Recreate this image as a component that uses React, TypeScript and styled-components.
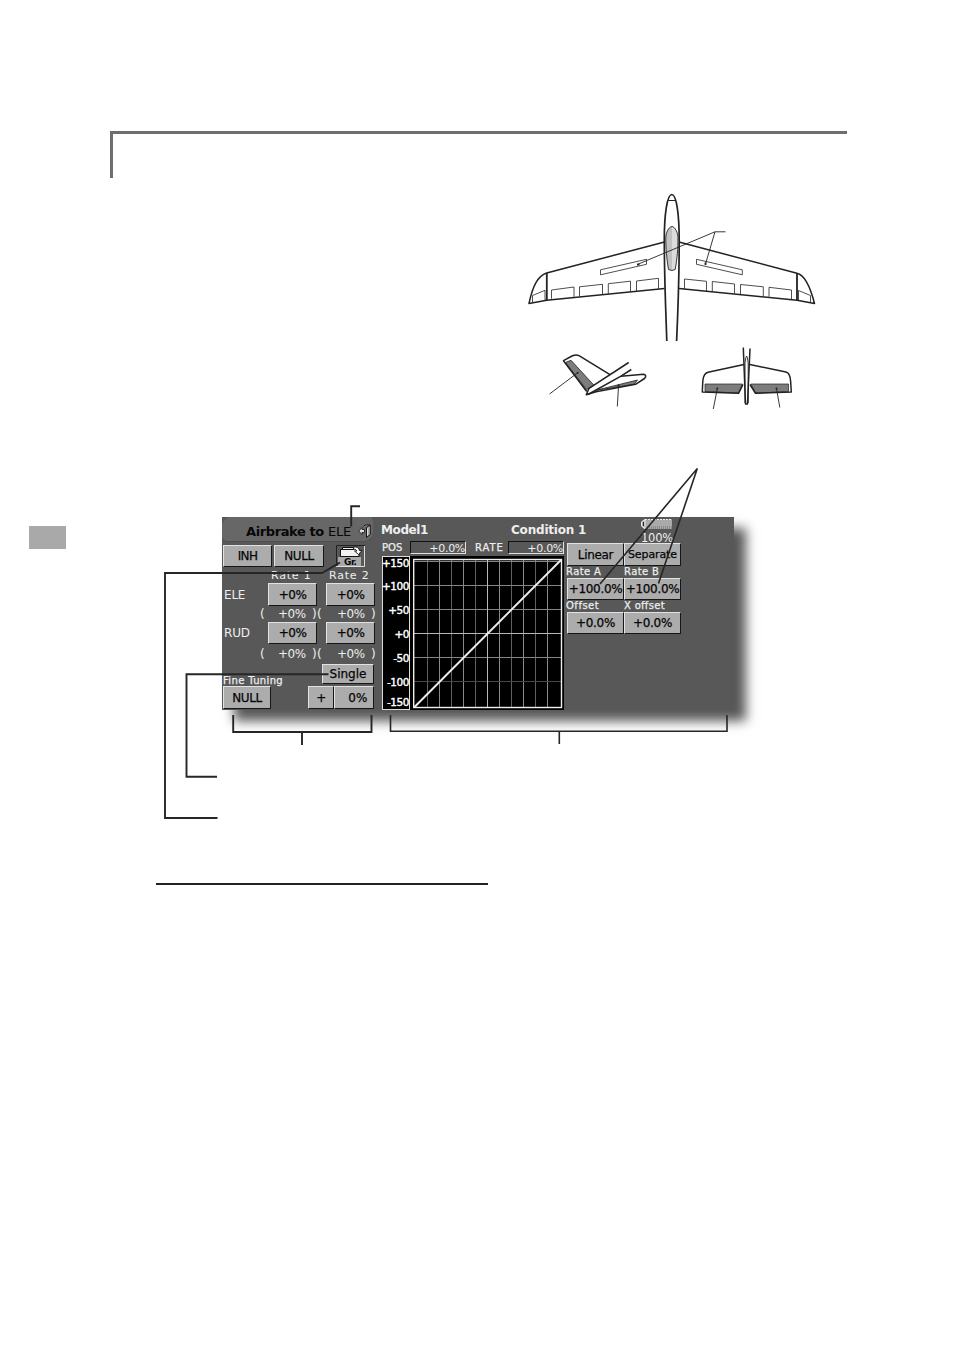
import React from "react";
import styled, { createGlobalStyle } from "styled-components";

const GlobalStyle = createGlobalStyle`
  body {
    margin: 0;
    background: #fff;
  }
  * {
    box-sizing: border-box;
  }
`;

const Page = styled.main`
  position: relative;
  width: 954px;
  height: 1350px;
  padding-top: 131px;
  overflow: hidden;
  font-family: "DejaVu Sans", sans-serif;
`;

const SectionHeading = styled.header`
  width: 737px;
  height: 47px;
  margin-left: 110px;
  border-top: 3px solid #6e6e6e;
  border-left: 3px solid #6e6e6e;
`;

const Figure = styled.svg`
  display: block;
  margin: 7px 0 0 520px;
`;

const ScreenRow = styled.section`
  display: flex;
  align-items: flex-start;
  margin-top: 102px;
`;

const PageTab = styled.div`
  width: 37px;
  height: 23px;
  margin: 9px 156px 0 29px;
  background: #a9a9a9;
`;

const Screen = styled.div`
  display: flex;
  width: 512px;
  height: 193px;
  background: #585858;
  box-shadow: 12px 11px 11px #585858;
  color: #eee;
  font-size: 12px;
  white-space: nowrap;

  svg {
    flex: none;
  }
`;

const Settings = styled.div`
  display: flex;
  flex-direction: column;
  width: 157px;
`;

const TitleBar = styled.div`
  display: flex;
  align-items: center;
  width: 151px;
  height: 25px;
  margin-bottom: 3px;
  padding: 3px 1px 0 24px;
  border-radius: 9px 4px 9px 5px;
  background: #676767;
  box-shadow: inset 0 -1px #505050;
  color: #080808;
  font-size: 13px;
  letter-spacing: -0.15px;
  white-space: pre;

  b {
    letter-spacing: -0.4px;
  }

  svg {
    margin-left: auto;
  }
`;

const Row = styled.div<{ $h: number; $align?: string }>`
  display: flex;
  flex: none;
  align-items: ${(p) => p.$align || "center"};
  height: ${(p) => p.$h}px;
`;

const Button = styled.div<{ $w: number; $h?: number; $ml?: number; $size?: number; $track?: number }>`
  display: flex;
  flex: none;
  align-items: center;
  justify-content: center;
  width: ${(p) => p.$w}px;
  height: ${(p) => p.$h || 22}px;
  margin-left: ${(p) => p.$ml || 0}px;
  border: 1px solid;
  border-color: #e2e2e2 #161616 #161616 #e2e2e2;
  background: #acacac;
  color: #050505;
  font-size: ${(p) => p.$size || 12}px;
  letter-spacing: ${(p) => p.$track ?? -0.7}px;
  -webkit-text-stroke: 0.25px #050505;
`;

const Label = styled.span<{ $w?: number; $ml?: number; $size?: number; $track?: number; $bold?: boolean }>`
  flex: none;
  width: ${(p) => (p.$w ? `${p.$w}px` : "auto")};
  margin-left: ${(p) => p.$ml || 0}px;
  font-size: ${(p) => p.$size || 12}px;
  font-weight: ${(p) => (p.$bold ? 700 : 400)};
  line-height: 1;
  letter-spacing: ${(p) => p.$track || 0}px;
  -webkit-text-stroke: ${(p) => (p.$size === 10 ? 0.25 : 0)}px #eee;
`;

const GroupButton = styled.div`
  display: flex;
  width: 29px;
  height: 22px;
  margin-left: 12px;
`;

const Main = styled.div`
  width: 355px;
`;

const StatusBar = styled.div`
  display: flex;
  height: 26px;
  padding-left: 2px;
`;

const Battery = styled.div`
  display: flex;
  flex-direction: column;
  align-items: center;
  width: 34px;
  margin-left: 52px;
  padding-top: 1px;
  font-size: 11.5px;
  line-height: 16px;
  letter-spacing: -0.2px;
`;

const Columns = styled.div`
  display: flex;
`;

const Graph = styled.div`
  width: 187px;
  margin-top: -2px;
  padding-left: 3px;
`;

const Readout = styled.div`
  width: 56px;
  height: 13px;
  border: 1px solid;
  border-color: #111 #e0e0e0 #e0e0e0 #111;
  font-size: 11px;
  line-height: 14px;
  letter-spacing: -0.3px;
  text-align: right;
`;

const Plot = styled.div`
  display: flex;
  margin-top: 2px;
`;

const Axis = styled.div`
  display: flex;
  flex-direction: column;
  width: 28px;
  height: 154px;
  padding-top: 1px;
  border: 1px solid #ddd;
  background: #000;
  color: #fff;
  font-size: 10.5px;
  letter-spacing: -0.45px;
  -webkit-text-stroke: 0.4px #fff;
`;

const Tick = styled.span<{ $h: number }>`
  display: flex;
  justify-content: flex-end;
  height: ${(p) => p.$h}px;
  line-height: 11px;
`;

const Curve = styled.div`
  display: grid;
  grid-template-columns: 58px 58px;
  grid-template-rows: 23px 12px 22px 12px 22px;
  align-items: center;
  align-content: start;
`;

const Underline = styled.div`
  width: 332px;
  height: 2px;
  margin: 173px 0 0 156px;
  background: #222;
`;

const Callouts = styled.svg`
  position: absolute;
  top: 0;
  left: 0;
  pointer-events: none;
`;

const wingPanels = [
  "551.5,298.7 551.5,290 574,287 574,296.8",
  "579.5,296.2 579.5,286.8 602.5,284.3 602.5,294",
  "608.3,293.7 608.3,283.7 630.5,281.2 630.5,291.7",
  "636.5,291 636.5,281 658.5,278.3 658.5,288.8",
  "684.5,289 684.5,279 706.5,281.3 706.5,291",
  "712.3,291.6 712.3,281.5 734.5,284 734.5,293.5",
  "740.5,294.3 740.5,284.5 763.3,286.8 763.3,296.2",
  "769,296.7 769,287.3 791.5,290 791.5,299",
];

const ticks: [string, number][] = [
  ["+150", 23],
  ["+100", 24],
  ["+50", 24],
  ["+0", 24],
  ["-50", 24],
  ["-100", 20],
  ["-150", 12],
];

function Glider() {
  return (
    <Figure width="300" height="230" viewBox="520 185 300 230" fill="none" stroke="#222" strokeWidth="1.5" strokeLinejoin="round">
      <path d="M664.5 242 546.7 273C538 276 533 285 529 303.5L546.7 300.3 664.5 288.5" />
      <path d="M679 242 797 273.3C805 275 810 286 814.5 303.5L797 300.3 679 288.5" />
      <path d="M546.8 273V300.5M797 273V300.5" strokeWidth="1.8" />
      <path d="M666.8 341C666 315 664.3 280 664.3 240 664.3 215 667 194.5 671.8 194.5S679.2 215 679.2 240C679.2 280 677.8 315 676.6 341" strokeWidth="1.7" />
      <path d="M668.3 200.5H675.2" strokeWidth="1" />
      <g strokeWidth="0.8">
        {wingPanels.map((points) => (
          <polyline key={points} points={points} />
        ))}
        <path d="M532.5 303V295.5L545 290.3V300M798.5 300V290.5L810.5 295.5V303" />
        <path d="M600.5 269.8 646.5 259.3V264.3L600.5 274.8ZM696.5 259.3 742.3 269.8V274.8L696.5 264.3Z" />
      </g>
      <path d="M672 226.5C668.5 227 665.8 233 665.8 238 665.8 249 666.5 257 668.5 269.5L672 270.5Z" fill="#c2c2c2" stroke="none" />
      <path d="M672 226.5C675.3 227 678 233 678 238 678 249 677.3 257 675.2 269.5L672 270.5Z" fill="#dcdcdc" stroke="none" />
      <path d="M672 226.5C668.5 227 665.8 233 665.8 238 665.8 249 666.5 257 668.5 269.5Q672 271.5 675.2 269.5C677.3 257 678 249 678 238 678 233 675.3 227 672 226.5Z" strokeWidth="0.9" />
      <path d="M725.5 231.8H715L638.5 264M715 231.8 705.5 264" strokeWidth="0.9" />
      <path d="M637 264.5h2.5M705.5 262.5v2.5" strokeWidth="1.8" />

      {/* V tail */}
      <path d="M565.5 362.5 571 360.3 594 385.3 586.5 389.5Z" fill="#7d7d7d" strokeWidth="0.8" />
      <path d="M595 390.5 637.5 380 634 384.3Z" fill="#7d7d7d" strokeWidth="0.8" />
      <path d="M610 374.7 579 355.7Q576 354.2 572 356L563.5 360.7 586.7 391.5" />
      <path d="M628.7 362.5 589 388.3 586.3 394.8 596 391.7 635.5 384.3 644.5 378.5Q647.5 375.2 643.5 374.3L621 376.2" />
      <path d="M631.3 369.5 621 376.2 588 394.5" />
      <path d="M549.5 394 578 372.5M617.3 406.5 618.6 385" strokeWidth="0.9" />
      <circle cx="577.7" cy="372.8" r="1" fill="#222" stroke="none" />
      <circle cx="618.5" cy="385.5" r="1" fill="#222" stroke="none" />

      {/* conventional tail */}
      <path d="M705 384H742.5L738.5 393 705 391.5ZM788.5 384H751L755.5 393 788.5 391.8Z" fill="#7d7d7d" strokeWidth="0.7" />
      <path d="M744 364.5 708 372.3Q703.5 373.5 702.8 381L702.3 392 738.5 393.3 743 384.5" />
      <path d="M749.8 364.5 786 372Q790 373 790.6 381L791.3 392 755.5 393.3 750 384.5" />
      <path d="M743.3 347.5 745.5 404H747.5L750 348.5" />
      <path d="M745 403V363Q746.6 349 748.2 363V403" strokeWidth="0.9" />
      <path d="M713.3 409 717.3 388.5M779.8 407.5 776.5 388.5" strokeWidth="0.9" />
      <circle cx="717.3" cy="388.5" r="1" fill="#222" stroke="none" />
      <circle cx="776.5" cy="388.5" r="1" fill="#222" stroke="none" />
    </Figure>
  );
}

function DoorIcon() {
  return (
    <svg width="14" height="15" viewBox="0 0 14 15" fill="none" stroke="#161616">
      <path d="M5.5 2.5 7 1H12.3V10.5L8.5 13.5V3.5L12 1.3" fill="#aaa" />
      <path d="M0.8 7 4 3.5V5.5H6.5V8.5H4V10.5Z" fill="#ddd" strokeWidth="0.8" />
      <path d="M9.5 4.5V11.5" stroke="#ddd" />
    </svg>
  );
}

function GroupIcon() {
  return (
    <svg width="29" height="22" viewBox="0 0 29 22">
      <path d="M0.5 22V0.5H29" fill="none" stroke="#222" />
      <path d="M28.5 1V21.5H0" fill="none" stroke="#ddd" />
      <rect x="2" y="12" width="23" height="9" fill="#aaa" />
      <path d="M4.5 11.5V4.5H6.5V2.5H17.5L19.5 4.5H23V11.5Z" fill="#f2f2f2" stroke="#111" />
      <path d="M6 4.5H18" stroke="#111" />
      <path d="M17.5 2.2Q22.5 1 23.5 5.5H26L22.5 9.5 18.5 6H21Q20 4 17.5 4Z" fill="#fff" stroke="#111" strokeWidth="0.9" />
      <text x="8" y="20" fontFamily="DejaVu Sans" fontWeight="bold" fontSize="9" letterSpacing="-0.5" fill="#080808">
        Gr.
      </text>
    </svg>
  );
}

function Chart() {
  const verticals = [427.5, 439.5, 451.5, 463.5, 475.5, 499.5, 511.5, 523.5, 535.5, 547.5];
  return (
    <svg width="154" height="154" viewBox="410 556 154 154">
      <rect x="410" y="556" width="154" height="154" fill="#000" />
      {verticals.map((x, i) => (
        <path key={x} d={`M${x} 560V707`} stroke={i % 2 ? "#8a8a8a" : "#606060"} />
      ))}
      {[561.5, 585.5, 609.5, 657.5].map((y) => (
        <path key={y} d={`M414 ${y}H562`} stroke="#858585" />
      ))}
      <path d="M414 681.5H562" stroke="#484848" />
      <path d="M487.5 560V707M414 633.5H562" stroke="#b8b8b8" />
      <rect x="413.7" y="559.5" width="147.8" height="148" fill="none" stroke="#eee" strokeWidth="1.4" />
      <path d="M414.5 707 561 560" stroke="#eee" strokeWidth="1.9" />
    </svg>
  );
}

const Offsets = () => (
  <>
    <Label $w={5} $ml={38}>(</Label>
    <Label $w={34} $ml={13} $track={-0.5}>+0%</Label>
    <Label $w={5}>)</Label>
    <Label $w={5}>(</Label>
    <Label $w={34} $ml={15} $track={-0.5}>+0%</Label>
    <Label>)</Label>
  </>
);

const RateRow = ({ name, h }: { name: string; h: number }) => (
  <Row $h={h}>
    <Label $w={44} $ml={2} $track={-0.2}>{name}</Label>
    <Button $w={49} $h={h} $track={-0.5}>+0%</Button>
    <Button $w={49} $h={h} $ml={9} $track={-0.5}>+0%</Button>
  </Row>
);

export default function App() {
  return (
    <Page>
      <GlobalStyle />
      <SectionHeading />
      <Glider />

      <ScreenRow>
        <PageTab />
        <Screen>
          <Settings>
            <TitleBar>
              <b>Airbrake to </b>ELE
              <DoorIcon />
            </TitleBar>
            <Row $h={22}>
              <Button $w={49} $ml={1}>INH</Button>
              <Button $w={50} $ml={2} $track={-0.4}>NULL</Button>
              <GroupButton>
                <GroupIcon />
              </GroupButton>
            </Row>
            <Row $h={16} $align="center">
              <Label $ml={49} $w={40} $size={11} $track={0.8}>Rate 1</Label>
              <Label $ml={18} $size={11} $track={0.8}>Rate 2</Label>
            </Row>
            <RateRow name="ELE" h={23} />
            <Row $h={16}>
              <Offsets />
            </Row>
            <RateRow name="RUD" h={22} />
            <Row $h={20}>
              <Offsets />
            </Row>
            <Row $h={22} $align="flex-end">
              <Label $w={99} $ml={1} $size={10} $track={0.35}>Fine Tuning</Label>
              <Row $h={22} $align="flex-start">
                <Button $w={52} $h={20} $track={0}>Single</Button>
              </Row>
            </Row>
            <Row $h={23}>
              <Button $w={48} $h={23} $ml={1} $track={-0.4}>NULL</Button>
              <Button $w={26} $h={23} $ml={37}>+</Button>
              <Button $w={40} $h={23} $track={0}>&nbsp;&nbsp;0%</Button>
            </Row>
          </Settings>

          <Main>
            <StatusBar>
              <Row $h={26}>
                <Label $w={130} $bold $track={-0.4}>Model1</Label>
                <Label $w={77} $bold $track={-0.2}>Condition 1</Label>
              </Row>
              <Battery>
                <svg width="34" height="12" viewBox="0 0 34 12">
                  <path d="M4 1.5H32V11H4L1 8V4Z" fill="#aaa" />
                  <path d="M5 1.5H32" stroke="#eee" strokeDasharray="2 1" />
                  <path d="M5 9.5H32" stroke="#888" strokeDasharray="1 1" strokeWidth="3" />
                  <path d="M5 1.5 1.5 4V8L5 10.5V2" fill="none" stroke="#e8e8e8" />
                  <path d="M3.5 4V8" stroke="#222" />
                </svg>
                100%
              </Battery>
            </StatusBar>
            <Columns>
              <Graph>
                <Row $h={13}>
                  <Label $w={28} $size={10} $track={0}>POS</Label>
                  <Readout>+0.0%</Readout>
                  <Label $ml={9} $w={33} $size={10} $track={0.9}>RATE</Label>
                  <Readout>+0.0%</Readout>
                </Row>
                <Plot>
                  <Axis>
                    {ticks.map(([text, h]) => (
                      <Tick key={text} $h={h}>{text}</Tick>
                    ))}
                  </Axis>
                  <Chart />
                </Plot>
              </Graph>
              <Curve>
                <Button $w={57} $h={23} $ml={1} $track={-0.3}>Linear</Button>
                <Button $w={57} $h={23} $size={11} $track={-0.1}>Separate</Button>
                <Label $size={10} $track={0.4}>Rate A</Label>
                <Label $size={10} $track={0.4}>Rate B</Label>
                <Button $w={57} $ml={1} $track={-0.3}>+100.0%</Button>
                <Button $w={57} $track={-0.3}>+100.0%</Button>
                <Label $size={10} $track={0.5}>Offset</Label>
                <Label $size={10} $track={0.3}>X offset</Label>
                <Button $w={57} $ml={1} $track={-0.3}>+0.0%</Button>
                <Button $w={57} $track={-0.3}>+0.0%</Button>
              </Curve>
            </Columns>
          </Main>
        </Screen>
      </ScreenRow>

      <Underline />

      <Callouts width="954" height="1350" fill="none" stroke="#262626" strokeWidth="1.9">
        <path d="M360 506.3H351.2V526.5" />
        <path d="M600 584 697.3 468.5 658.5 583.5" strokeWidth="1.6" />
        <path d="M340 562.5 322 573H165V818H217.5" />
        <path d="M328.5 674.3H186.5V776.7H217" />
        <path d="M233.2 715V732H371.5V715M302 732V745" />
        <path d="M390.5 715V731.3H727V715M559.3 731V744" strokeWidth="1.6" />
      </Callouts>
    </Page>
  );
}
